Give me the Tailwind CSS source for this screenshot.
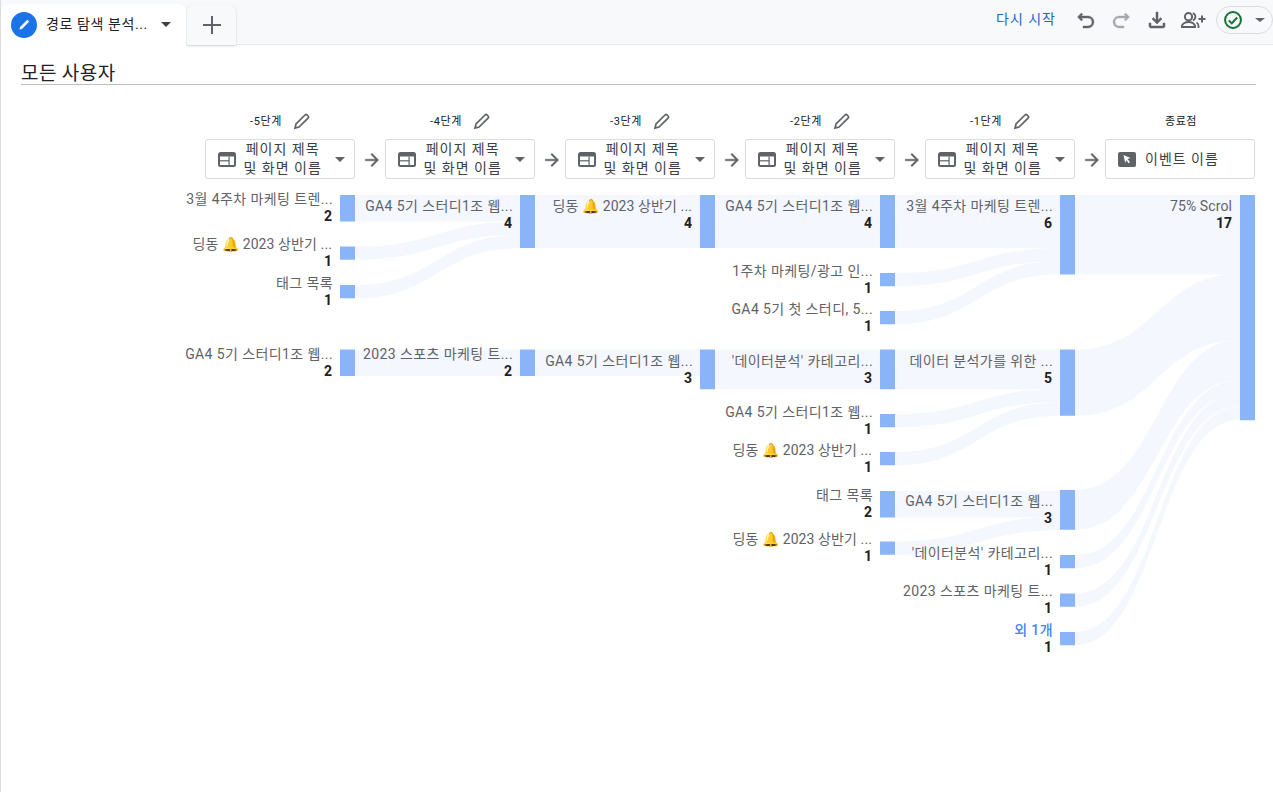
<!DOCTYPE html>
<html lang="ko">
<head>
    <meta charset="UTF-8">
    <title>경로 탐색 분석</title>
    <script src="https://cdn.jsdelivr.net/npm/@tailwindcss/browser@4"></script>
</head>
<body class="bg-white h-[792px] overflow-hidden font-['Roboto','Noto_Sans_CJK_KR',sans-serif] text-[#3c4043]">
    <div class="h-[792px] border-l border-[#dadce0] flex flex-col">
        <!-- tab bar -->
        <header class="h-[45px] shrink-0 bg-[#f8f9fa] border-b border-[#e8eaed] flex items-start relative">
            <div class="mt-1 w-[185px] h-[41px] bg-white rounded-t-lg flex items-center pl-[10px] relative z-10">
                <span class="w-[26px] h-[26px] rounded-full bg-[#1a73e8] flex items-center justify-center">
                    <svg width="16" height="16" viewBox="0 0 16 16" fill="none"><path d="M3.5 12.5l.5-2.5 6.5-6.5a1.3 1.3 0 0 1 1.900 0 1.3 1.3 0 0 1 0 1.900L6 12z" fill="#fff"/></svg>
                </span>
                <span class="ml-[9px] text-[14px] tracking-[0.6px] text-[#202124] w-[113px] whitespace-nowrap">경로 탐색 분석...</span>
                <span class="ml-[2px] w-0 h-0 border-x-[5px] border-x-transparent border-t-[5px] border-t-[#3c4043]"></span>
            </div>
            <button class="mt-1 ml-[1px] w-[49px] h-[41px] bg-[#f8f9fa] rounded-t-lg shadow-[0_1px_2px_rgba(60,64,67,0.25)] flex items-center justify-center">
                <svg width="24" height="24" viewBox="0 0 24 24" fill="#5f6368"><path d="M21 13h-8v8h-2v-8H3v-2h8V3h2v8h8z"/></svg>
            </button>
            <div class="ml-auto h-[40px] flex items-center">
                <span class="text-[14px] tracking-[1px] text-[#1967d2] mr-[18px] -mt-[2px]">다시 시작</span>
                <svg class="mr-[11px]" width="24" height="24" viewBox="0 0 24 24" fill="#5f6368" stroke="#5f6368" stroke-width=".4"><path d="M7.4 5 3.5 9l3.900 4 1.400-1.400L7.300 10H14a4 4 0 0 1 0 8H9v2h5a6 6 0 0 0 0-12H7.300l1.500-1.600z"/></svg>
                <svg class="mr-[12px]" width="24" height="24" viewBox="0 0 24 24" fill="#a5a8ac" stroke="#a5a8ac" stroke-width=".4"><path d="M16.6 5 20.500 9l-3.900 4-1.400-1.400 1.500-1.600H10a4 4 0 0 0 0 8h5v2h-5a6 6 0 0 1 0-12h6.700l-1.500-1.600z"/></svg>
                <svg class="mr-[12px]" width="24" height="24" viewBox="0 0 24 24" fill="#5f6368" stroke="#5f6368" stroke-width=".5"><path d="M18 15v3H6v-3H4v3c0 1.100.9 2 2 2h12c1.100 0 2-.9 2-2v-3h-2zm-1-4-1.400-1.400L13 12.200V4h-2v8.200L8.400 9.600 7 11l5 5 5-5z"/></svg>
                <svg class="mr-[10px]" width="25" height="16" viewBox="0 0 25 16" fill="none" stroke="#5f6368" stroke-width="2"><circle cx="7.5" cy="4.7" r="3.6"/><path d="M1 15v-1c0-2 3-4 6.5-4s6.5 2 6.5 4v1z"/><path d="M11.8 1.1a3.8 3.8 0 0 1 0 7.2" stroke-width="1.8"/><path d="M15.5 10.5c1.3.6 2 1.8 2 3.5v2" stroke-width="1.8"/><path d="M21 3.5v7M17.5 7h7"/></svg>
                <div class="w-[57px] h-[28px] border border-[#dadce0] rounded-full flex items-center pl-[6px]">
                    <svg width="20" height="20" viewBox="0 0 24 24" fill="none"><circle cx="12" cy="12" r="9.5" stroke="#137333" stroke-width="2.4"/><path d="M7 12.5l3.500 3.500L17 9" stroke="#137333" stroke-width="2.4"/></svg>
                    <span class="ml-[12px] w-0 h-0 border-x-[5px] border-x-transparent border-t-[4px] border-t-[#5f6368]"></span>
                </div>
            </div>
        </header>

        <!-- segment title -->
        <div class="ml-[20px] mr-[17px] mt-[15px] h-[25px] border-b border-[#bdbdbd] text-[19px] leading-[27px] text-[#202124] tracking-[0.4px]">모든 사용자</div>

        <!-- step header -->
        <div class="ml-[204px] mt-[23px] flex" id="steps"></div>

        <!-- diagram -->
        <div class="relative flex-1" id="chart">
            <svg id="sankey" class="absolute left-[-1px] top-[-179px]" width="1273" height="792"></svg>
        </div>
    </div>

    <script>
        const pencil = '<svg width="18" height="18" viewBox="0 0 18 18" fill="none" stroke="#5f6368" stroke-width="1.7"><path d="M2 16l1-4 9-9a1.5 1.5 0 0 1 2.100 0l1 1a1.5 1.5 0 0 1 0 2.100L6 15z"/></svg>';
        const tableIcon = '<svg width="18" height="15" viewBox="0 0 18 15"><rect width="18" height="15" rx="2.5" fill="#5f6368"/><rect x="2" y="4.5" width="14" height="8.5" fill="#fff"/><rect x="10.5" y="4.5" width="1.2" height="8.5" fill="#5f6368"/><rect x="2" y="8.2" width="9" height="1.2" fill="#5f6368"/></svg>';
        const cursorIcon = '<svg width="18" height="15" viewBox="0 0 18 15"><rect width="18" height="15" rx="2" fill="#5f6368"/><path d="M5.5 3l7 3-3 1 2.500 3-1.300 1.200-2.500-3-1 2.800z" fill="#fff"/></svg>';
        const arrow = '<svg class="absolute left-[-24px] top-[10px]" width="20" height="20" viewBox="0 0 24 24" fill="#5f6368" stroke="#5f6368" stroke-width=".5"><path d="M12 4l-1.410 1.410L16.170 11H4v2h12.170l-5.580 5.590L12 20l8-8z"/></svg>';

        const steps = ['-5단계', '-4단계', '-3단계', '-2단계', '-1단계', '종료점'];
        document.getElementById('steps').innerHTML = steps.map((s, i) => {
            const end = i === 5;
            return `<div class="w-[150px] mr-[30px] shrink-0">
                <div class="h-[24px] pt-[4px] flex items-center justify-center text-[11px] tracking-[0.6px] text-[#202124] ${end ? 'pl-[2px]' : 'pr-[28px]'} relative">${s}
                    ${end ? '' : `<span class="absolute left-[88px] top-[4px]">${pencil}</span>`}</div>
                <div class="relative mt-[7px] h-[40px] border border-[#dadce0] rounded-[3px] flex items-center pl-[12px] text-[14px] tracking-[1px] leading-[19px] text-[#3c4043]">
                    ${i > 0 ? arrow : ''}
                    ${end ? cursorIcon : tableIcon}
                    ${end ? '<span class="ml-[9px]">이벤트 이름</span>'
                          : `<span class="ml-[7.5px] text-center">페이지 제목<br>및 화면 이름</span>
                             <span class="absolute right-[9px] top-[17px] w-0 h-0 border-x-[5px] border-x-transparent border-t-[5px] border-t-[#5f6368]"></span>`}
                </div>
            </div>`;
        }).join('');

        const unit = 13.25;
        const colX = [340, 520, 700, 880, 1060, 1240];

        // col, top, count, label
        const nodes = [
            [0, 195, 2, '3월 4주차 마케팅 트렌...'],
            [0, 246.5, 1, '딩동 🔔 2023 상반기 ...'],
            [0, 285, 1, '태그 목록'],
            [0, 349.5, 2, 'GA4 5기 스터디1조 웹...'],
            [1, 195, 4, 'GA4 5기 스터디1조 웹...'],
            [1, 349.5, 2, '2023 스포츠 마케팅 트...'],
            [2, 195, 4, '딩동 🔔 2023 상반기 ...'],
            [2, 349.5, 3, 'GA4 5기 스터디1조 웹...'],
            [3, 195, 4, 'GA4 5기 스터디1조 웹...'],
            [3, 273, 1, '1주차 마케팅/광고 인...'],
            [3, 311, 1, 'GA4 5기 첫 스터디, 5...'],
            [3, 349.5, 3, "'데이터분석' 카테고리..."],
            [3, 414, 1, 'GA4 5기 스터디1조 웹...'],
            [3, 452, 1, '딩동 🔔 2023 상반기 ...'],
            [3, 491, 2, '태그 목록'],
            [3, 541.5, 1, '딩동 🔔 2023 상반기 ...'],
            [4, 195, 6, '3월 4주차 마케팅 트렌...'],
            [4, 349.5, 5, '데이터 분석가를 위한 ...'],
            [4, 490, 3, 'GA4 5기 스터디1조 웹...'],
            [4, 555, 1, "'데이터분석' 카테고리..."],
            [4, 593.5, 1, '2023 스포츠 마케팅 트...'],
            [4, 632, 1, '외 1개', true],
            [5, 195, 17, '75% Scrol'],
        ];

        // from column, from y, count, to y
        const links = [
            [0, 195, 2, 195], [0, 246.5, 1, 221.5], [0, 285, 1, 235], [0, 349.5, 2, 349.5],
            [1, 195, 4, 195], [1, 349.5, 2, 349.5],
            [2, 195, 4, 195], [2, 349.5, 3, 349.5],
            [3, 195, 4, 195], [3, 273, 1, 248], [3, 311, 1, 261], [3, 349.5, 3, 349.5],
            [3, 414, 1, 389], [3, 452, 1, 402.5], [3, 491, 2, 491], [3, 541.5, 1, 517],
            [4, 195, 6, 195], [4, 349.5, 5, 274], [4, 490, 3, 340], [4, 555, 1, 380],
            [4, 593.5, 1, 393], [4, 632, 1, 406.5],
        ];

        let svg = '';
        links.forEach(([c, y0, n, y1]) => {
            const x0 = colX[c] + 15, x1 = colX[c + 1], m = (x0 + x1) / 2, h = n * unit;
            svg += `<path d="M${x0} ${y0}C${m} ${y0} ${m} ${y1} ${x1} ${y1}L${x1} ${y1 + h}C${m} ${y1 + h} ${m} ${y0 + h} ${x0} ${y0 + h}Z" fill="#f4f7fe"/>`;
        });
        nodes.forEach(([c, y, n]) => {
            svg += `<rect x="${colX[c]}" y="${y}" width="15" height="${n * unit}" fill="#8ab4f8"/>`;
        });
        document.getElementById('sankey').innerHTML = svg;

        // small bars get the label centred on them, tall ones near the top
        const chart = document.getElementById('chart');
        nodes.forEach(([c, y, n, label, more]) => {
            const el = document.createElement('div');
            const firstLine = n <= 2 ? y + n * unit / 2 - 9 : y + 11;
            const tight = label.includes('🔔') || label.includes('Scrol');
            el.className = 'absolute w-[170px] text-right text-[14px] leading-[17px] whitespace-nowrap';
            el.style.left = (colX[c] - 8 - 170 - 1) + 'px';
            el.style.top = (firstLine - 8 - 179) + 'px';
            el.innerHTML = `<div class="${tight ? 'tracking-[0.1px]' : 'tracking-[0.4px] -mr-px'} ${more ? 'text-[#4285f4] font-medium' : 'text-[#5f6368]'}">${label}</div><div class="font-bold text-[#202124]">${n}</div>`;
            chart.appendChild(el);
        });
    </script>
</body>
</html>
